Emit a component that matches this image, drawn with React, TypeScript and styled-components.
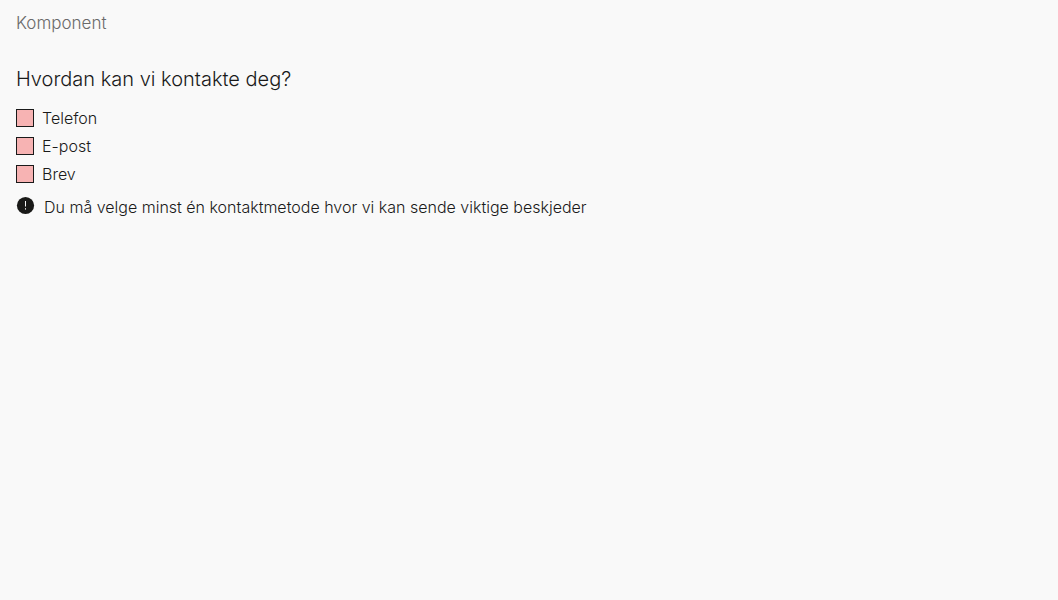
import React from "react";
import styled, { createGlobalStyle } from "styled-components";

const GlobalStyle = createGlobalStyle`
  body {
    margin: 0;
    background: #f9f9f9;
    color: #1a1a1a;
    font-family: Inter, "Liberation Sans", sans-serif;
    font-weight: 300;
    font-size: 16px;
    line-height: 22px;
  }
`;

const Page = styled.main`
  display: flex;
  flex-direction: column;
  gap: 30px;
  padding: 12px 16px;
`;

const Caption = styled.p`
  margin: 0;
  font-size: 17px;
  color: #6a6a6a;
`;

const FieldGroup = styled.fieldset`
  margin: 0;
  padding: 0;
  border: 0;
  min-width: 0;
`;

const Legend = styled.legend`
  padding: 0;
  margin-bottom: 10px;
  font-size: 20px;
  line-height: 30px;
`;

const Option = styled.label`
  display: flex;
  align-items: center;
  gap: 8px;
  width: fit-content;
  height: 28px;
`;

const Checkbox = styled.input`
  appearance: none;
  flex: none;
  width: 18px;
  height: 18px;
  margin: 0;
  border: 1px solid #1a1a1a;
  border-radius: 0;
  background: #f7b3b3;

  &:checked {
    background: #1a1a1a;
  }
`;

const ErrorMessage = styled.div`
  display: flex;
  align-items: flex-start;
  gap: 8px;
  margin-top: 8px;
`;

const ErrorIcon = styled.svg`
  flex: none;
  width: 20px;
  height: 20px;
`;

const options = ["Telefon", "E-post", "Brev"];

export default function App() {
  return (
    <>
      <GlobalStyle />
      <Page>
        <Caption>Komponent</Caption>
        <FieldGroup aria-describedby="contact-error">
          <Legend>Hvordan kan vi kontakte deg?</Legend>
          {options.map((name) => (
            <Option key={name}>
              <Checkbox type="checkbox" name="contact" value={name} aria-invalid="true" />
              {name}
            </Option>
          ))}
          <ErrorMessage id="contact-error">
            <ErrorIcon viewBox="0 0 20 20" aria-hidden="true">
              <circle cx="9.5" cy="9.5" r="8.6" fill="#1a1a18" />
              <path d="M9.5 5v5.5M9.5 12.2v1.4" stroke="#f9f9f9" fill="none" />
            </ErrorIcon>
            <span>Du må velge minst én kontaktmetode hvor vi kan sende viktige beskjeder</span>
          </ErrorMessage>
        </FieldGroup>
      </Page>
    </>
  );
}
